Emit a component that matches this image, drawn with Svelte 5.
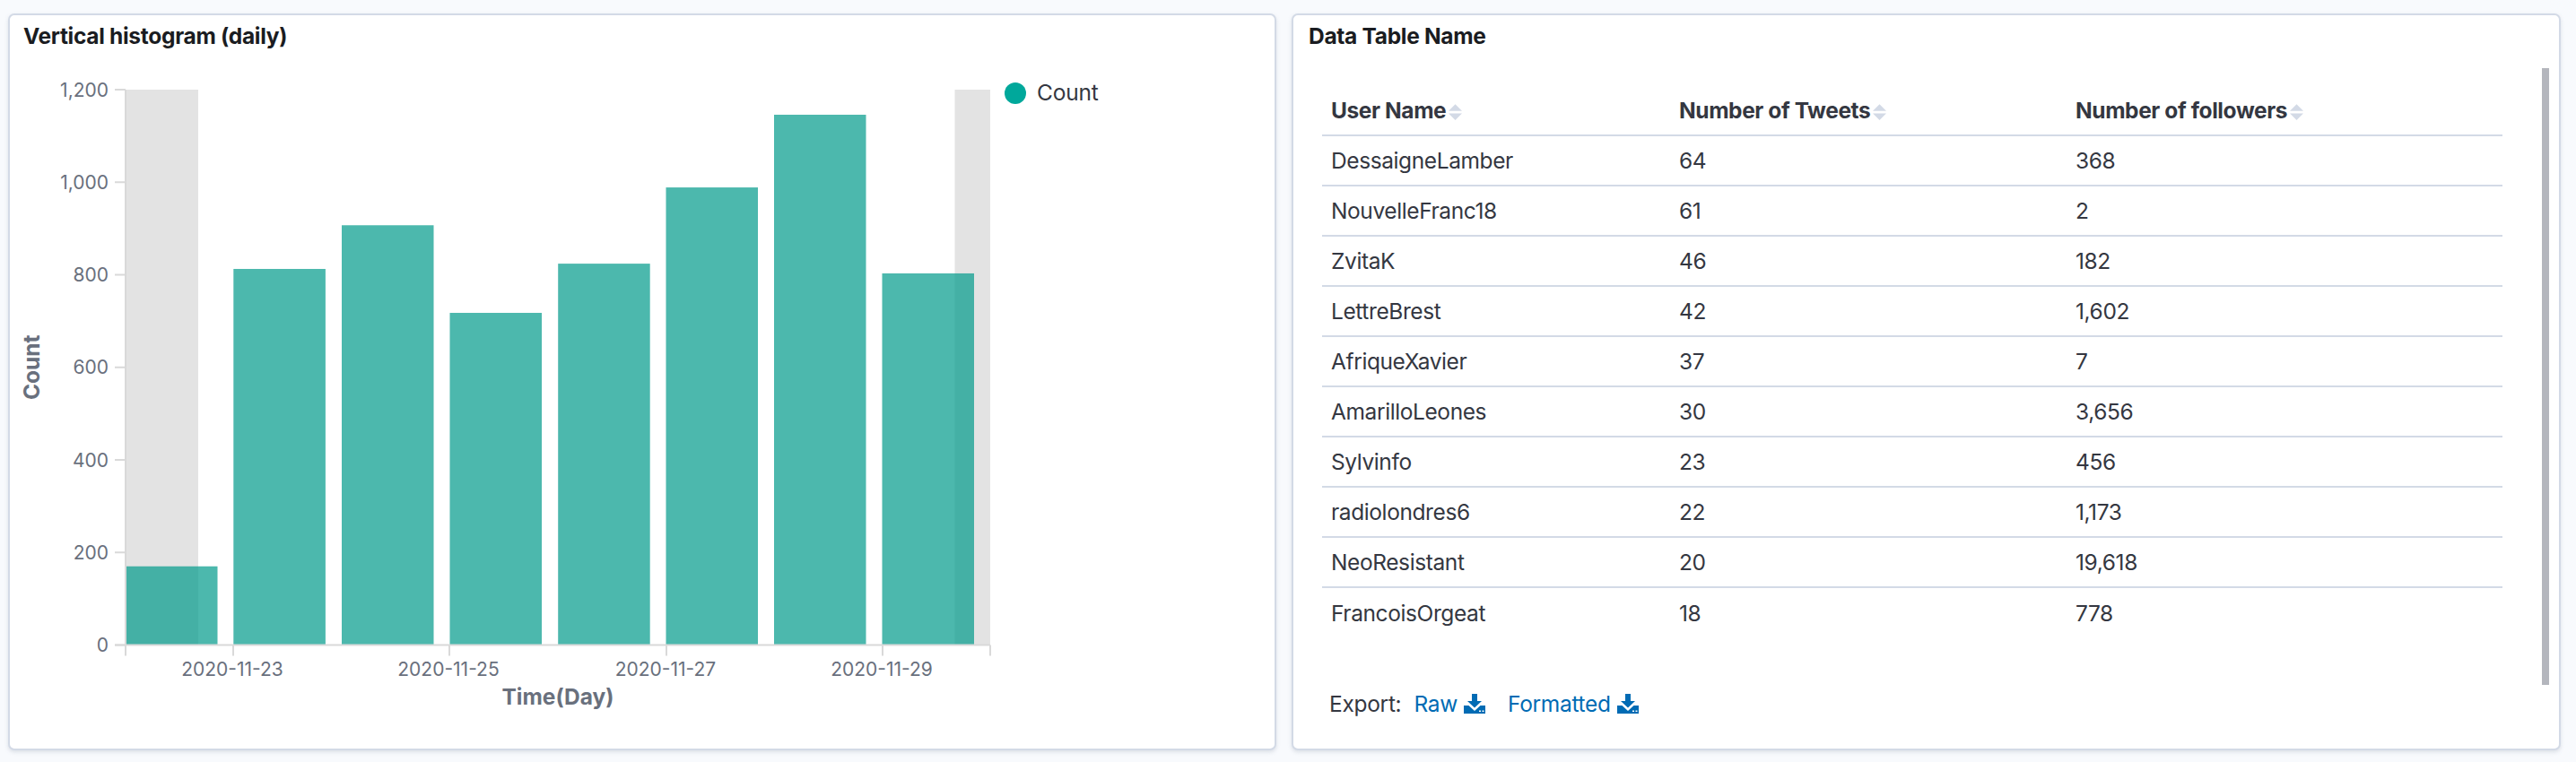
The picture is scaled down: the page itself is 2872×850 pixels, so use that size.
<script>
  const rows = [
    ["DessaigneLamber", "64", "368"],
    ["NouvelleFranc18", "61", "2"],
    ["ZvitaK", "46", "182"],
    ["LettreBrest", "42", "1,602"],
    ["AfriqueXavier", "37", "7"],
    ["AmarilloLeones", "30", "3,656"],
    ["Sylvinfo", "23", "456"],
    ["radiolondres6", "22", "1,173"],
    ["NeoResistant", "20", "19,618"],
    ["FrancoisOrgeat", "18", "778"],
  ];
  const columns = ["User Name", "Number of Tweets", "Number of followers"];
  const exportLinks = ["Raw", "Formatted"];

  // the svg covers the whole page so chart coordinates are page pixels
  const y0 = 719.5;
  const yScale = 619.5 / 1200;
  const y = (v) => y0 - v * yScale;

  const bars = [
    { x: 140, w: 102.5, v: 170 },
    { x: 260.3, w: 102.6, v: 812.6 },
    { x: 381, w: 102.5, v: 907 },
    { x: 501.5, w: 102.5, v: 717.7 },
    { x: 622.2, w: 102.5, v: 824 },
    { x: 742.5, w: 102.5, v: 988.7 },
    { x: 863, w: 102.5, v: 1145.8 },
    { x: 983.5, w: 102.5, v: 803 },
  ];
  const yTicks = [0, 200, 400, 600, 800, 1000, 1200];
  const xTicks = [
    { x: 260, label: "2020-11-23" },
    { x: 501, label: "2020-11-25" },
    { x: 743, label: "2020-11-27" },
    { x: 984, label: "2020-11-29" },
  ];
</script>

<div class="page">
  <div class="prev"></div>
  <div class="panels">
    <section class="panel chart-panel">
      <h2>Vertical histogram (daily)</h2>
      <svg class="chart" width="1423" height="850" viewBox="0 0 1423 850">
        <rect class="out" x="140" y={y(1200)} width="81" height="619.5" />
        <rect class="out" x="1064.5" y={y(1200)} width="39.5" height="619.5" />
        {#each bars as b}
          <rect class="bar" x={b.x} y={y(b.v)} width={b.w} height={b.v * yScale} />
        {/each}
        <line class="axis" x1="140" x2="140" y1={y(1200)} y2={y0 + 12} />
        <line class="axis" x1="128" x2="1104" y1={y0} y2={y0} />
        <line class="axis" x1="1104" x2="1104" y1={y0} y2={y0 + 12} />
        {#each yTicks as t}
          <line class="axis" x1="128" x2="140" y1={y(t)} y2={y(t)} />
          <text class="tick" x="121" y={y(t) + 7.5} text-anchor="end">{t.toLocaleString("en-US")}</text>
        {/each}
        {#each xTicks as t}
          <line class="axis" x1={t.x} x2={t.x} y1={y0} y2={y0 + 12} />
          <text class="tick" x={t.x - 1} y={y0 + 34} text-anchor="middle">{t.label}</text>
        {/each}
        <text class="title" x="622" y={y0 + 66} text-anchor="middle">Time(Day)</text>
        <text class="title" transform="translate(44 {y(600)}) rotate(-90)" text-anchor="middle">Count</text>
        <circle class="dot" cx="1132" cy="104" r="12" />
        <text class="legend" x="1156" y="112">Count</text>
      </svg>
    </section>

    <section class="panel table-panel">
      <h2>Data Table Name</h2>
      <div class="scroll">
        <table>
          <thead>
            <tr>
              {#each columns as c}
                <th>
                  {c}<svg class="sort" width="15" height="19" viewBox="0 0 16 20"><path d="M8 0 16 8H0Z" /><path d="M0 11H16L8 19Z" /></svg>
                </th>
              {/each}
            </tr>
          </thead>
          <tbody>
            {#each rows as r}
              <tr>
                {#each r as cell}
                  <td>{cell}</td>
                {/each}
              </tr>
            {/each}
          </tbody>
        </table>
        <div class="export">
          <span>Export:</span>
          {#each exportLinks as link}
            <a href="#{link}">{link}<svg class="dl" width="24" height="22" viewBox="0 0 24 22"><path d="M9 0H15V8H20L12 15.500 4 8H9Z" /><path fill-rule="evenodd" d="M0 13H5.500L12 19 18.500 13H24V22H0ZM17 18.500V20H19V18.500ZM20.500 18.500V20H22.500V18.500Z" /></svg></a>
          {/each}
        </div>
      </div>
      <div class="thumb"></div>
    </section>
  </div>
</div>

<style>
  :global(body) {
    background: #f8fafd;
    font-family: Inter, "Liberation Sans", sans-serif;
    color: #343741;
  }
  .page {
    height: 850px;
    overflow: hidden;
    padding: 0 17px 0 9px;
    box-sizing: border-box;
  }
  .prev {
    height: 0;
    margin: 0 8px 15px 4px;
    box-shadow: 0 1px 5px rgba(152, 162, 179, 0.25);
  }
  .panels {
    display: grid;
    grid-template-columns: 1414px 1415px;
    gap: 17px;
  }
  .panel {
    position: relative;
    height: 822px;
    box-sizing: border-box;
    background: #fff;
    border: 2px solid #d3dae6;
    border-radius: 7px;
    box-shadow: 0 2px 4px rgba(152, 162, 179, 0.3);
    overflow: hidden;
  }
  h2 {
    margin: 0;
    padding: 7px 15px 0;
    font-size: 24.5px;
    line-height: 32px;
    font-weight: 700;
    color: #1a1c21;
    letter-spacing: -0.3px;
  }
  .table-panel h2 {
    padding-left: 17px;
  }
  .chart {
    display: block;
    position: absolute;
    left: -11px;
    top: -17px;
  }
  .out { fill: #e3e3e3; }
  .bar { fill: #009a8a; fill-opacity: 0.7; }
  .axis { stroke: #d9d9d9; stroke-width: 2; }
  .tick {
    font-size: 21px;
    fill: #69707d;
  }
  .title {
    font-size: 24.5px;
    font-weight: 700;
    fill: #69707d;
  }
  .legend {
    font-size: 24.5px;
    fill: #343741;
    letter-spacing: -0.2px;
  }
  .dot { fill: #00a89b; }

  .scroll {
    padding: 40px 63px 0 32px;
  }
  table {
    width: 100%;
    border-collapse: separate;
    border-spacing: 0;
    table-layout: fixed;
    font-size: 24.5px;
    letter-spacing: -0.4px;
  }
  th {
    height: 56px;
    padding: 0 0 0 10px;
    text-align: left;
    font-weight: 700;
    color: #343741;
    border-bottom: 2px solid #d3dae6;
    box-sizing: border-box;
  }
  th:nth-child(1) { width: 388px; }
  th:nth-child(2) { width: 442px; }
  td {
    height: 56px;
    padding: 0 0 0 10px;
    box-sizing: border-box;
    border-bottom: 2px solid #d3dae6;
  }
  tr:last-child td { border-bottom: 0; }
  .sort {
    margin-left: 3px;
    vertical-align: -3px;
    fill: #d3dae6;
  }
  .export {
    display: flex;
    align-items: center;
    margin: 58px 0 0 8px;
    font-size: 24.5px;
    letter-spacing: -0.3px;
  }
  .export span {
    margin-right: 14px;
  }
  .export a {
    color: #006bb4;
    text-decoration: none;
    display: flex;
    align-items: center;
    gap: 7px;
    margin-right: 25px;
  }
  .dl { fill: #006bb4; }
  .thumb {
    position: absolute;
    left: 1392px;
    top: 59px;
    width: 8px;
    height: 688px;
    background: #b4b6bd;
  }
</style>
